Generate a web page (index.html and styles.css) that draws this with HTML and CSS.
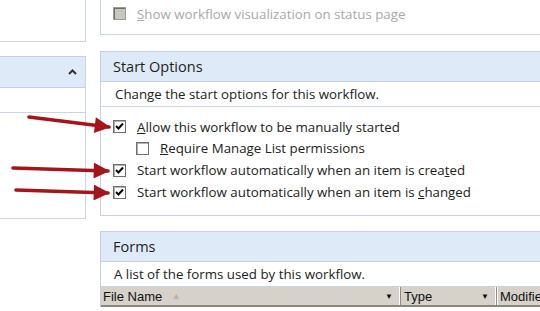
FILE: index.html
```html
<!DOCTYPE html>
<html lang="en">
<head>
    <meta charset="UTF-8">
    <title>Workflow Settings</title>
    <link rel="stylesheet" href="styles.css">
</head>
<body>
    <div class="page">
        <div class="side">
            <div class="side-top"></div>
            <div class="side-panel">
                <div class="side-head">
                    <svg class="chevron" width="9" height="6" viewBox="0 0 9 6"><polyline points="1,5 4.5,1.5 8,5" fill="none" stroke="#333" stroke-width="2"/></svg>
                </div>
                <div class="side-row"></div>
                <div class="side-body"></div>
            </div>
        </div>

        <div class="main">
            <div class="panel-top">
                <label class="opt disabled">
                    <span class="box grey"></span>
                    <span><u>S</u>how workflow visualization on status page</span>
                </label>
            </div>

            <div class="panel">
                <div class="panel-head">Start Options</div>
                <div class="panel-desc">Change the start options for this workflow.</div>
                <div class="options">
                    <label class="opt">
                        <span class="box"><svg width="9" height="9" viewBox="0 0 9 9"><polyline points="1,4 3.5,6.5 8,1.5" fill="none" stroke="#000" stroke-width="2"/></svg></span>
                        <span><u>A</u>llow this workflow to be manually started</span>
                    </label>
                    <label class="opt sub">
                        <span class="box"></span>
                        <span><u>R</u>equire Manage List permissions</span>
                    </label>
                    <label class="opt">
                        <span class="box"><svg width="9" height="9" viewBox="0 0 9 9"><polyline points="1,4 3.5,6.5 8,1.5" fill="none" stroke="#000" stroke-width="2"/></svg></span>
                        <span>Start workflow automatically when an item is crea<u>t</u>ed</span>
                    </label>
                    <label class="opt">
                        <span class="box"><svg width="9" height="9" viewBox="0 0 9 9"><polyline points="1,4 3.5,6.5 8,1.5" fill="none" stroke="#000" stroke-width="2"/></svg></span>
                        <span>Start workflow automatically when an item is <u>c</u>hanged</span>
                    </label>
                </div>
            </div>

            <div class="panel forms">
                <div class="panel-head">Forms</div>
                <div class="panel-desc">A list of the forms used by this workflow.</div>
                <div class="grid-head">
                    <div class="col col-name">File Name <span class="sort">&#9650;</span><span class="drop">&#9660;</span></div>
                    <div class="col col-type">Type<span class="drop">&#9660;</span></div>
                    <div class="col col-mod">Modified</div>
                </div>
            </div>
        </div>
    </div>

    <!-- callout arrows drawn over the screenshot -->
    <svg class="arrows" width="120" height="220" viewBox="0 0 120 220">
        <defs>
            <marker id="head" viewBox="0 0 10 10" refX="9" refY="5" markerWidth="5.2" markerHeight="4.4" orient="auto" markerUnits="strokeWidth">
                <path d="M0,0 L10,5 L0,10 Z" fill="#a3151a"/>
            </marker>
        </defs>
        <g stroke="#a3151a" stroke-width="3.6" stroke-linecap="round" marker-end="url(#head)">
            <line x1="29" y1="117" x2="109" y2="127"/>
            <line x1="13" y1="168" x2="108" y2="171"/>
            <line x1="16" y1="190" x2="108" y2="193"/>
        </g>
    </svg>
</body>
</html>
```

FILE: styles.css
```css
* {
    padding: 0;
    margin: 0;
    box-sizing: border-box;
}
body {
    width: 540px;
    height: 311px;
    overflow: hidden;
    background: #fff;
    font-family: "Open Sans", "Noto Sans", sans-serif;
    font-size: 13.3px;
    color: #222;
    position: relative;
}
.page {
    display: flex;
    gap: 14px;
    width: 620px;
}
.side {
    flex: none;
    width: 86px;
}
.side-top {
    height: 42px;
    border-right: 1px solid #c9d5e6;
    border-bottom: 1px solid #c9d5e6;
}
.side-panel {
    margin-top: 14px;
    border-top: 1px solid #c2d0e3;
    border-right: 1px solid #c9d5e6;
    border-bottom: 1px solid #c9d5e6;
}
.side-head {
    height: 31px;
    background: #dfeaf8;
    border-bottom: 1px solid #c2d0e3;
    display: flex;
    align-items: center;
    justify-content: flex-end;
    padding-right: 8px;
}
.side-row {
    height: 25px;
    border-bottom: 1px solid #c9d5e6;
}
.side-body {
    height: 105px;
}
.main {
    flex: none;
    width: 520px;
}
.panel-top {
    height: 35px;
    border-left: 1px solid #c9d5e6;
    border-bottom: 1px solid #c9d5e6;
    padding: 5px 0 0 12px;
}
.panel {
    margin-top: 16px;
    border: 1px solid #c2d0e3;
    border-right: none;
}
.panel-head {
    height: 30px;
    background: #dfeaf8;
    border-bottom: 1px solid #c2d0e3;
    font-size: 14.5px;
    line-height: 29px;
    padding-left: 12px;
    color: #1e1e1e;
}
.panel-desc {
    height: 25px;
    line-height: 24px;
    padding-left: 14px;
    border-bottom: 1px solid #c9d5e6;
    color: #222;
}
.options {
    padding: 11px 0 9px 12px;
    display: flex;
    flex-direction: column;
    gap: 4.9px;
    height: 108px;
}
.opt {
    display: flex;
    align-items: center;
    gap: 11px;
    height: 17px;
    white-space: nowrap;
}
.opt.sub {
    margin-left: 23px;
}
.opt.disabled {
    color: #a8a8a8;
}
.box {
    flex: none;
    width: 13px;
    height: 13px;
    border: 1px solid #707070;
    background: #fff;
    box-shadow: inset 1px 1px 0 #b0b0b0;
    display: flex;
    align-items: center;
    justify-content: center;
}
.box.grey {
    background: #c8c6c0;
    border-color: #9a9a9a;
    box-shadow: inset 1px 1px 0 #6e6e6e;
}
.forms {
    margin-top: 15px;
    border-bottom: none;
}
.forms .panel-desc {
    padding-left: 13px;
}
.grid-head {
    display: flex;
    height: 20px;
    background: #d6d2ca;
    border-bottom: 2px solid #8a877f;
    font-family: "Liberation Sans", Arial, sans-serif;
    font-size: 13px;
    color: #111;
}
.col {
    position: relative;
    line-height: 19px;
    padding-left: 2px;
    border-right: 1px solid #8f8c86;
    box-shadow: inset -1px 0 0 #fff;
    white-space: nowrap;
}
.col-name {
    width: 300px;
}
.col-type {
    width: 96px;
    padding-left: 3px;
}
.col-mod {
    flex: 1;
    border-right: none;
    box-shadow: inset 1px 0 0 #fff;
    padding-left: 3px;
}
.sort {
    color: #b4b1aa;
    font-size: 9px;
    margin-left: 6px;
    vertical-align: 2px;
}
.drop {
    position: absolute;
    right: 7px;
    top: 0;
    font-size: 8px;
}
.arrows {
    position: absolute;
    left: 0;
    top: 0;
}
```
